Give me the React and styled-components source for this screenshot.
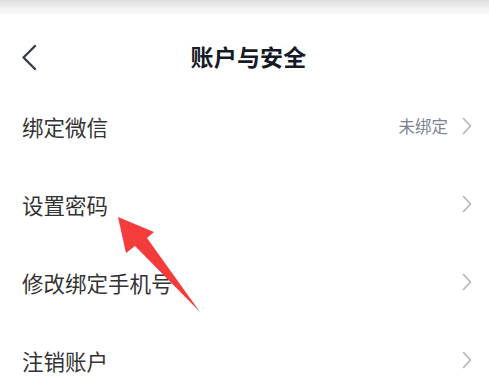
import React from "react";
import styled, { createGlobalStyle } from "styled-components";

const Global = createGlobalStyle`
  html, body { margin: 0; padding: 0; background: #fff; }
  body { font-family: "Noto Sans CJK SC", "Noto Sans", sans-serif; overflow: hidden; }
`;

const Page = styled.div`
  position: relative;
  width: 489px;
  height: 389px;
  overflow: hidden;
  background: #fff;
`;

const TopStrip = styled.div`
  height: 14px;
  background: linear-gradient(#dedede, #f2f2f2 60%, #fafafa);
`;

const Header = styled.div`
  height: 62px;
  padding-top: 11px;
  padding-left: 8px;
  display: flex;
  align-items: center;
  justify-content: center;
  position: relative;
`;

const BackBtn = styled.div`
  position: absolute;
  left: 20px;
  top: 12px;
  height: 64px;
  display: flex;
  align-items: center;
`;

const Title = styled.div`
  font-size: 23px;
  font-weight: 700;
  color: #151a26;
  letter-spacing: 0.2px;
`;

const List = styled.div`
  display: flex;
  flex-direction: column;
`;

const Row = styled.div`
  height: 78px;
  display: flex;
  align-items: center;
  padding: 0 17px 0 22px;
`;

const Label = styled.div`
  flex: 1;
  font-size: 21.5px;
  color: #333;
`;

const Value = styled.div`
  font-size: 16.5px;
  color: #7b8391;
  margin-right: 14px;
`;

const ArrowOverlay = styled.svg`
  position: absolute;
  left: 0;
  top: 0;
  pointer-events: none;
`;

const Chevron = () => (
  <svg width="10" height="18" viewBox="0 0 10 18">
    <path d="M1.5 1.5 L8.5 9 L1.5 16.5" fill="none" stroke="#b3b3b3" strokeWidth="1.6" strokeLinecap="round" strokeLinejoin="round" />
  </svg>
);

const rows = [
  { label: "绑定微信", value: "未绑定" },
  { label: "设置密码" },
  { label: "修改绑定手机号" },
  { label: "注销账户" },
];

export default function App() {
  return (
    <Page>
      <Global />
      <TopStrip />
      <Header>
        <BackBtn>
          <svg width="18" height="28" viewBox="0 0 18 28">
            <path d="M15 2 L3.5 13.5 L15 25" fill="none" stroke="#363c48" strokeWidth="2.4" strokeLinecap="round" strokeLinejoin="round" />
          </svg>
        </BackBtn>
        <Title>账户与安全</Title>
      </Header>
      <List>
        {rows.map((r) => (
          <Row key={r.label}>
            <Label>{r.label}</Label>
            {r.value && <Value>{r.value}</Value>}
            <Chevron />
          </Row>
        ))}
      </List>
      <ArrowOverlay width="489" height="389" viewBox="0 0 489 389">
        <polygon points="118,217 154,232 147,238 200,312 135,246 126,253" fill="#f53c3c" />
      </ArrowOverlay>
    </Page>
  );
}
